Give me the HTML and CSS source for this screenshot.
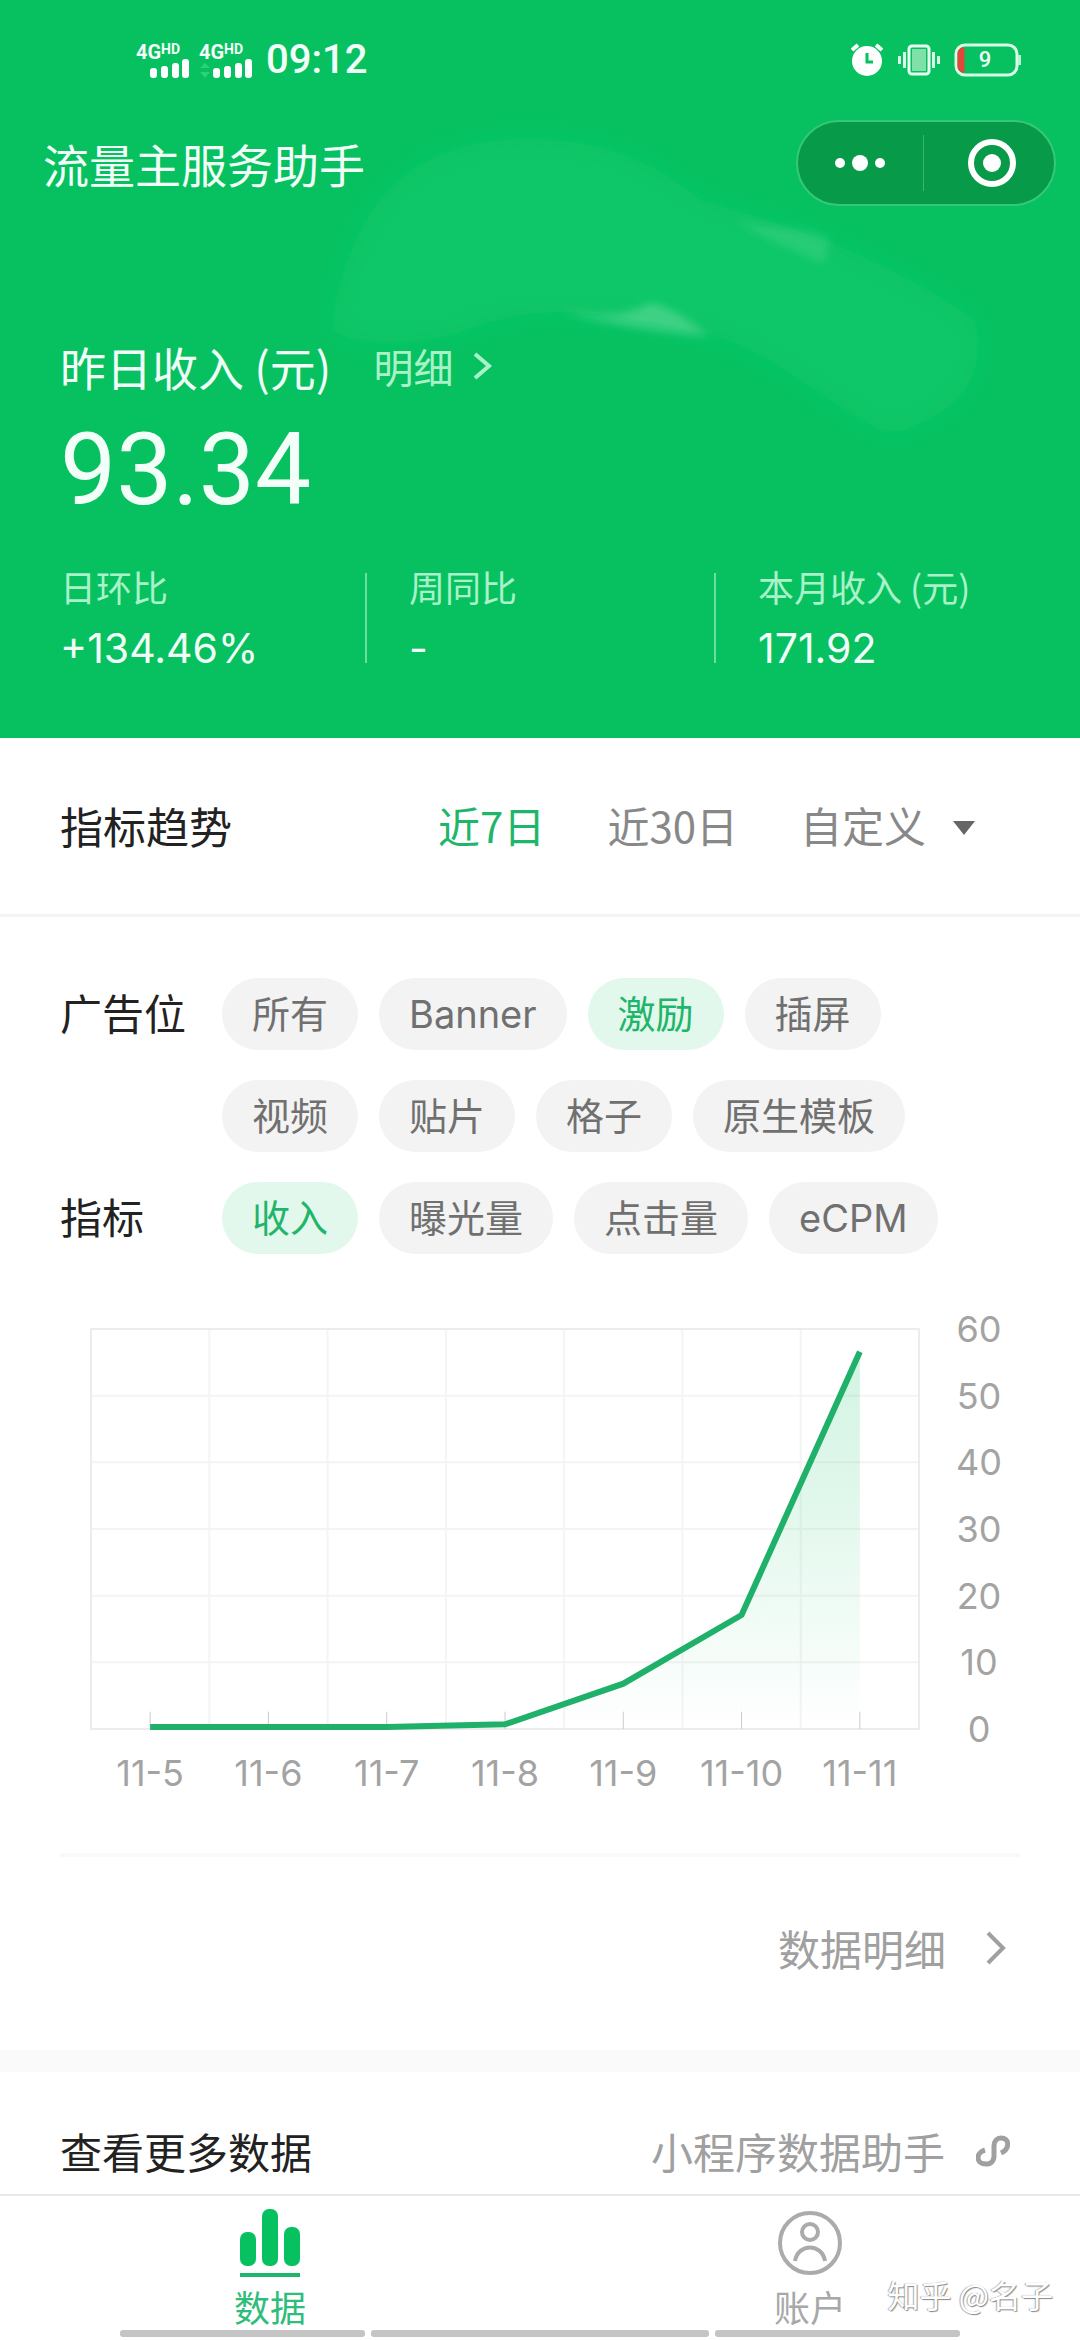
FILE: index.html
```html
<!DOCTYPE html>
<html lang="zh-CN">
<head>
<meta charset="utf-8">
<meta name="viewport" content="width=device-width, initial-scale=1">
<title>流量主服务助手</title>
<link rel="stylesheet" href="styles.css">
</head>
<body>
<header class="hero">
  <svg class="hero-art" viewBox="0 0 1080 738" preserveAspectRatio="none" aria-hidden="true">
    <defs>
      <filter id="soft" x="-10%" y="-10%" width="120%" height="120%"><feGaussianBlur stdDeviation="14"/></filter>
      <filter id="glint" x="-20%" y="-30%" width="140%" height="160%"><feGaussianBlur stdDeviation="4"/></filter>
    </defs>
    <path class="swoosh" filter="url(#soft)" d="M330 330 C345 250 370 190 430 160 C500 125 620 130 700 200 C790 225 880 255 975 320 C985 370 970 410 890 435 C820 400 760 340 690 330 C600 310 540 305 480 325 C430 345 370 350 330 330Z"/>
    <path class="gleam gleam-faint" filter="url(#glint)" d="M735 220 C770 230 800 225 830 238 L824 264 C795 250 765 240 735 220Z"/>
    <path class="gleam" filter="url(#glint)" d="M560 310 C600 316 625 318 650 303 C675 308 690 322 710 337 C660 332 605 325 560 310Z"/>
  </svg>

  <div class="status">
    <div class="status-left">
      <div class="signal">
        <span class="net">4G<sup>HD</sup></span>
        <svg class="bars" viewBox="0 0 54 20" aria-hidden="true"><g fill="#fff"><rect x="14" y="9" width="7" height="10" rx="3"/><rect x="25" y="7" width="7" height="12" rx="3"/><rect x="36" y="4" width="7" height="15" rx="3"/><rect x="46" y="0" width="7" height="19" rx="3"/></g></svg>
      </div>
      <div class="signal">
        <span class="net">4G<sup>HD</sup></span>
        <svg class="bars" viewBox="0 0 54 20" aria-hidden="true"><path d="M1 9l5-5 5 5zM1 13l5 6 5-6z" fill="#2fd07b"/><g fill="#fff"><rect x="14" y="9" width="7" height="10" rx="3"/><rect x="25" y="7" width="7" height="12" rx="3"/><rect x="36" y="4" width="7" height="15" rx="3"/><rect x="46" y="0" width="7" height="19" rx="3"/></g></svg>
      </div>
      <time class="clock">09:12</time>
    </div>
    <div class="status-right">
      <svg width="34" height="34" viewBox="0 0 34 34" aria-hidden="true"><path d="M2 7l6-5M26 2l6 5" stroke="#fff" stroke-width="4"/><circle cx="17" cy="18" r="15" fill="#fff"/><path d="M17 10v9h6" fill="none" stroke="#07c160" stroke-width="3"/></svg>
      <svg width="42" height="34" viewBox="0 0 42 34" aria-hidden="true"><rect x="11" y="3" width="20" height="28" rx="3" fill="none" stroke="#e8fff2" stroke-width="3"/><rect x="14" y="6" width="14" height="22" fill="#7fe0a8"/><path d="M6.500 9v16M1.500 13v8M35.500 9v16M40.500 13v8" stroke="#d4f9e4" stroke-width="3"/></svg>
      <div class="battery">
        <svg width="68" height="34" viewBox="0 0 68 34" aria-hidden="true"><rect x="2" y="2" width="61" height="30" rx="9" fill="none" stroke="#d9fbe8" stroke-width="3"/><path d="M9 5h1v24H9a5 5 0 0 1-5-5V10a5 5 0 0 1 5-5z" fill="#e0483a" stroke="#e0483a"/><path d="M65.500 12v10" stroke="#b8f3d1" stroke-width="3"/></svg>
        <span class="battery-level">9</span>
      </div>
    </div>
  </div>

  <div class="nav">
    <h1 class="nav-title">流量主服务助手</h1>
    <div class="capsule">
      <button class="capsule-btn" type="button" aria-label="更多"><svg width="52" height="20" viewBox="0 0 52 20"><g fill="#fff"><circle cx="6" cy="10" r="5"/><circle cx="26" cy="10" r="8"/><circle cx="46" cy="10" r="5"/></g></svg></button>
      <button class="capsule-btn" type="button" aria-label="关闭"><svg width="50" height="50" viewBox="0 0 50 50"><circle cx="25" cy="25" r="21" fill="none" stroke="#fff" stroke-width="6"/><circle cx="25" cy="25" r="9" fill="#fff"/></svg></button>
    </div>
  </div>

  <section class="income">
    <div class="income-head">
      <h2 class="income-title">昨日收入 (元)</h2>
      <a class="income-more" href="#detail">明细<svg width="20" height="28" viewBox="0 0 20 28" aria-hidden="true"><path d="M2 2l14 12L2 26" fill="none" stroke="currentColor" stroke-width="4"/></svg></a>
    </div>
    <p class="income-value">93.34</p>
    <dl class="stats">
      <div class="stat"><dt>日环比</dt><dd>+134.46%</dd></div>
      <div class="stat"><dt>周同比</dt><dd>-</dd></div>
      <div class="stat"><dt>本月收入 (元)</dt><dd>171.92</dd></div>
    </dl>
  </section>
</header>

<main class="content">
  <div class="trend-head">
    <h2 class="heading">指标趋势</h2>
    <div class="ranges">
      <button class="range range-on" type="button">近7日</button>
      <button class="range" type="button">近30日</button>
      <span class="range-custom">
        <select class="range" aria-label="时间范围"><option>自定义</option></select>
        <svg width="22" height="20" viewBox="0 0 22 20" aria-hidden="true"><path d="M0 6h22L11 20z" fill="#666"/></svg>
      </span>
    </div>
  </div>

  <div class="filters">
    <h3 class="heading filter-name">广告位</h3>
    <div class="chips">
      <button class="chip" type="button">所有</button>
      <button class="chip" type="button">Banner</button>
      <button class="chip chip-on" type="button">激励</button>
      <button class="chip" type="button">插屏</button>
      <button class="chip" type="button">视频</button>
      <button class="chip" type="button">贴片</button>
      <button class="chip" type="button">格子</button>
      <button class="chip" type="button">原生模板</button>
    </div>
    <h3 class="heading filter-name">指标</h3>
    <div class="chips">
      <button class="chip chip-on" type="button">收入</button>
      <button class="chip" type="button">曝光量</button>
      <button class="chip" type="button">点击量</button>
      <button class="chip" type="button">eCPM</button>
    </div>
  </div>

  <figure class="chart">
    <svg class="plot" viewBox="0 0 700 600" preserveAspectRatio="none" role="img" aria-label="收入趋势">
      <defs><linearGradient id="area" x1="0" y1="0" x2="0" y2="1"><stop offset="0" stop-color="#07c160" stop-opacity=".18"/><stop offset=".4" stop-color="#07c160" stop-opacity=".12"/><stop offset="1" stop-color="#07c160" stop-opacity="0"/></linearGradient></defs>
      <path class="grid-line" d="M100 0V600M200 0V600M300 0V600M400 0V600M500 0V600M600 0V600M0 100H700M0 200H700M0 300H700M0 400H700M0 500H700"/>
      <rect class="frame" x="0" y="0" width="700" height="600"/>
      <path fill="url(#area)" d="M50 600V597H250L350 593L450 532L550 429L650 34V600Z"/>
      <path class="tick" d="M50 574V600M150 574V600M250 574V600M350 574V600M450 574V600M550 574V600M650 574V600"/>
      <path class="line" d="M50 597H250L350 593L450 532L550 429L650 34"/>
    </svg>
    <div class="axis-y"><span>60</span><span>50</span><span>40</span><span>30</span><span>20</span><span>10</span><span>0</span></div>
    <div class="axis-x"><span>11-5</span><span>11-6</span><span>11-7</span><span>11-8</span><span>11-9</span><span>11-10</span><span>11-11</span></div>
  </figure>

  <a class="detail-link" id="detail" href="#detail">数据明细<svg width="20" height="34" viewBox="0 0 20 34" aria-hidden="true"><path d="M2 2l15 15L2 32" fill="none" stroke="currentColor" stroke-width="4"/></svg></a>

  <div class="more">
    <h2 class="heading">查看更多数据</h2>
    <a class="more-link" href="#helper">小程序数据助手<svg width="34" height="32" viewBox="0 0 34 32" aria-hidden="true"><path d="M9 15C-1 18 0 29 10 29C15 29 18 26 18 21V11C18 6 21 3 25 3C34 3 34 14 25 18" fill="none" stroke="currentColor" stroke-width="5"/></svg></a>
  </div>
</main>

<footer class="dock">
  <nav class="tabs">
    <a class="tab tab-on" href="#data"><svg width="68" height="70" viewBox="0 0 68 70" aria-hidden="true"><g fill="#07c160"><rect x="4" y="24" width="16" height="34" rx="7"/><rect x="26" y="1" width="16" height="57" rx="7"/><rect x="48" y="19" width="16" height="39" rx="7"/></g><path d="M4 67h60" stroke="#1fb56a" stroke-width="4"/></svg>数据</a>
    <a class="tab" href="#account"><svg width="68" height="70" viewBox="0 0 68 70" aria-hidden="true"><g fill="none" stroke="#ababab" stroke-width="4"><circle cx="34" cy="35" r="30"/><circle cx="34" cy="24" r="8"/><path d="M19 53C22 35 46 35 49 53"/></g></svg>账户</a>
  </nav>
  <div class="handles"><i></i><i class="handle-wide"></i><i></i></div>
  <span class="credit">知乎 @名子</span>
</footer>
</body>
</html>
```
FILE: styles.css
```css
* { box-sizing: border-box; }

body {
  margin: 0;
  min-height: 100vh;
  display: flex;
  flex-direction: column;
  background: #fff;
  color: #222;
  font-family: "Noto Sans CJK SC", "Noto Sans", sans-serif;
  font-size: 42px;
  line-height: 60px;
}

h1, h2, h3, p, dl, dd, figure { margin: 0; font-weight: 400; }
a { color: inherit; text-decoration: none; }
svg { display: block; flex: none; }
button, select {
  margin: 0;
  padding: 0;
  border: 0;
  background: none;
  color: inherit;
  font: inherit;
}
select { appearance: none; }

/* green header */
.hero { position: relative; background: #07c160; color: #f2fff8; }
.hero-art { position: absolute; inset: 0; width: 100%; height: 100%; }
.swoosh { fill: #0ac769; }
.gleam { fill: #fff; opacity: .2; }
.gleam-faint { opacity: .1; }

.status {
  position: relative;
  height: 120px;
  padding: 0 58px 0 136px;
  display: flex;
  align-items: center;
  justify-content: space-between;
}
.status-left, .status-right { display: flex; align-items: center; }
.status-left { gap: 9px; }
.status-right { gap: 14px; }
.signal { width: 54px; }
.net {
  display: block;
  height: 17px;
  font: 700 20px/20px Roboto, sans-serif;
  white-space: nowrap;
}
.net sup { font-size: 14px; line-height: 14px; vertical-align: 5px; }
.bars { width: 54px; height: 20px; }
.clock { margin-left: 4px; font: 500 40px/40px Roboto, sans-serif; }
.battery { position: relative; }
.battery-level {
  position: absolute;
  inset: 0 6px 0 0;
  text-align: center;
  font: 500 22px/34px Roboto, sans-serif;
}

.nav {
  position: relative;
  padding: 0 24px 0 43px;
  display: flex;
  align-items: center;
  justify-content: space-between;
}
.nav-title { font-size: 46px; }
.capsule {
  width: 260px;
  height: 86px;
  border: 2px solid #35c878;
  border-radius: 43px;
  background: #079a49;
  display: flex;
  align-items: center;
}
.capsule-btn {
  flex: 1;
  height: 56px;
  display: flex;
  align-items: center;
  justify-content: center;
}
.capsule-btn + .capsule-btn { border-left: 1px solid #3bb573; padding-left: 6px; }

.income { position: relative; padding: 130px 60px 70px; }
.income-head { display: flex; align-items: center; gap: 42px; }
.income-title { font-size: 46px; }
.income-more {
  display: flex;
  align-items: center;
  gap: 20px;
  font-size: 40px;
  color: #a9f2c9;
}
.income-value { margin-top: 24px; font: 400 100px/100px Roboto, sans-serif; }

.stats { margin-top: 48px; display: grid; grid-template-columns: 305fr 349fr 306fr; }
.stat { position: relative; white-space: nowrap; }
.stat + .stat { padding-left: 44px; }
.stat + .stat::before {
  content: "";
  position: absolute;
  left: 0;
  top: 5px;
  bottom: 5px;
  width: 2px;
  background: #6edda0;
}
.stat dt { font-size: 36px; line-height: 36px; color: #a9f2c9; }
.stat dd { margin-top: 24px; font: 400 41px/40px Inter, sans-serif; }

/* trend header */
.content { flex: 1; }
.heading { font-size: 42px; }
.trend-head {
  padding: 57px 105px 59px 60px;
  border-bottom: 3px solid #f4f4f4;
  display: flex;
  justify-content: space-between;
}
.trend-head .heading { font-size: 43px; }
.ranges { display: flex; gap: 62px; color: #888; }
.range { height: 60px; line-height: 60px; }
.range-on { color: #1fb56a; }
.range-custom { display: flex; align-items: center; gap: 26px; }

/* filters */
.filters {
  padding: 61px 60px 0;
  display: grid;
  grid-template-columns: 162px 1fr;
  row-gap: 30px;
}
.filter-name { line-height: 68px; }
.chips { display: flex; flex-wrap: wrap; gap: 30px 21px; }
.chip {
  height: 72px;
  padding: 0 30px;
  border-radius: 36px;
  background: #f3f3f3;
  color: #707070;
  font: 400 38px/72px Inter, "Noto Sans CJK SC", sans-serif;
}
.chip-on { background: #e2f8ec; color: #1fb56a; }

/* chart */
.chart {
  margin: 75px 41px 0 91px;
  display: grid;
  grid-template-columns: 1fr 120px;
  font: 400 36px/40px Inter, sans-serif;
  color: #a3a3a3;
  text-align: center;
}
.plot { width: 100%; height: 400px; overflow: visible; }
.plot path, .plot rect { vector-effect: non-scaling-stroke; }
.grid-line { fill: none; stroke: #f4f4f4; stroke-width: 2; }
.frame { fill: none; stroke: #ececec; stroke-width: 2; }
.tick { fill: none; stroke: #ccc; stroke-width: 1; }
.line { fill: none; stroke: #1fb169; stroke-width: 6; }
.axis-y { margin: -20px 0; display: flex; flex-direction: column; justify-content: space-between; }
.axis-x { margin-top: 24px; display: grid; grid-template-columns: repeat(7, 1fr); white-space: nowrap; }

/* links under the chart */
.detail-link {
  margin: 60px 60px 0;
  padding: 61px 14px 72px;
  border-top: 4px solid #f9f9f9;
  display: flex;
  align-items: center;
  justify-content: flex-end;
  gap: 40px;
  color: #a0a0a0;
}
.more {
  padding: 49px 70px 12px 60px;
  border-top: 22px solid #fafafa;
  display: flex;
  justify-content: space-between;
}
.more-link { display: flex; align-items: center; gap: 31px; color: #a0a0a0; }

/* bottom tabs */
.dock { position: relative; border-top: 2px solid #e8e8e8; padding-bottom: 3px; }
.tabs { display: grid; grid-template-columns: 1fr 1fr; padding: 12px 0 2px; }
.tab {
  display: flex;
  flex-direction: column;
  align-items: center;
  gap: 6px;
  font-size: 36px;
  line-height: 44px;
  color: #a8a8a8;
}
.tab-on { color: #2fbd7b; }
.handles { display: flex; gap: 6px; padding: 0 120px; }
.handles i { flex: 245; height: 7px; border-radius: 3px; background: #c4c4c4; }
.handles .handle-wide { flex: 338; }
.credit {
  position: absolute;
  right: 27px;
  top: 76px;
  font-size: 32px;
  line-height: 44px;
  color: #fff;
  text-shadow: 1px 1px 1px #888, -1px 0 1px #aaa;
}
```
